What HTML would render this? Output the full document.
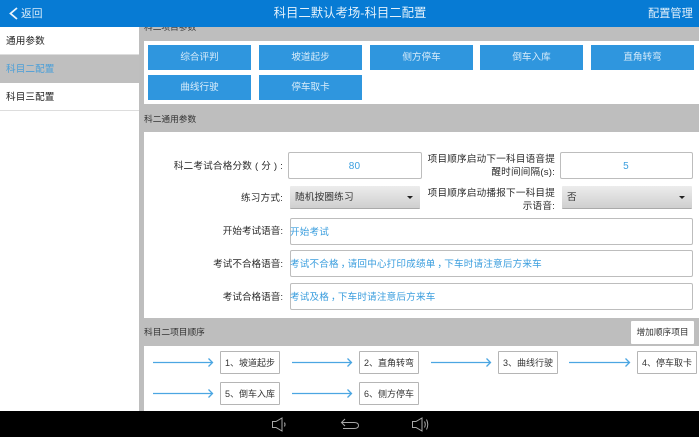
<!DOCTYPE html>
<html lang="zh">
<head>
<meta charset="utf-8">
<style>
html,body{margin:0;padding:0;width:699px;height:437px;overflow:hidden;background:#bebebe}
body{position:relative;font-family:"Liberation Sans","Noto Sans CJK SC",sans-serif;font-size:9.6px;color:#333;filter:blur(.3px)}
.a{position:absolute;box-sizing:border-box;white-space:nowrap}
.hdr{left:0;top:0;width:699px;height:27px;background:#077bd4;color:#e6f2fb}
.side{left:0;top:27px;width:139px;height:384px;background:#fff}
.si{left:0;width:139px;height:28px;line-height:29px;padding-left:6px;font-size:9.6px;letter-spacing:.1px;color:#222;border-bottom:1px solid #ddd}
.card{left:144px;width:555px;background:#fff}
.b{height:25px;width:103px;background:#2f96de;color:#d8ecfa;text-align:center;line-height:26px;font-size:9.6px}
.t{font-size:8.7px;color:#333}
.l{right:416px;text-align:right;line-height:14px;font-size:9.6px;letter-spacing:.2px;color:#2a2a2a}
.n{letter-spacing:0}
.i{background:#fff;border:1px solid #bdbdbd;border-radius:2px;color:#3b9ede;font-size:9.6px;letter-spacing:.17px;line-height:27px;text-indent:-1px}
.c{display:inline-block;transform:translateX(.3em)}
.s{height:23px;width:130px;background:linear-gradient(#ececec,#cfcfcf);border-bottom:1px solid #aaa;border-radius:1px;line-height:23px;padding-left:5px;font-size:9.6px;letter-spacing:.2px;color:#333}
.s:after{content:"";position:absolute;right:7px;top:10px;border-left:3.5px solid transparent;border-right:3.5px solid transparent;border-top:3.5px solid #222}
.bx{width:60px;height:23px;background:#fff;border:1px solid #b5b5b5;border-radius:1px;text-align:center;line-height:23px;font-size:9px;color:#333}
</style>
</head>
<body>
<div class="a hdr"></div>
<svg class="a" style="left:0;top:0" width="30" height="27"><path d="M17 8L10.500 13.500L17 19" fill="none" stroke="#eaf4fc" stroke-width="1.8"/></svg>
<div class="a" style="left:21px;top:0;height:27px;line-height:29px;font-size:10.8px;color:#d8ecfa">返回</div>
<div class="a" style="left:273px;top:0;height:27px;line-height:27px;font-size:12.4px;color:#e3f1fb;width:154px;text-align:center">科目二默认考场-科目二配置</div>
<div class="a" style="left:648px;top:0;height:27px;line-height:28px;font-size:11.2px;color:#e3f1fb">配置管理</div>

<div class="a side"></div>
<div class="a si" style="top:27px">通用参数</div>
<div class="a si" style="top:55px;background:#bfbfbf;color:#4a9fd8;border:0">科目二配置</div>
<div class="a si" style="top:83px">科目三配置</div>

<div class="a t" style="left:144px;top:20px;height:14px;line-height:14px;clip-path:inset(7px 0 0 0)">科二项目参数</div>
<div class="a card" style="top:41px;height:63px"></div>
<div class="a b" style="left:148px;top:45px">综合评判</div>
<div class="a b" style="left:259px;top:45px">坡道起步</div>
<div class="a b" style="left:370px;top:45px">侧方停车</div>
<div class="a b" style="left:480px;top:45px">倒车入库</div>
<div class="a b" style="left:591px;top:45px">直角转弯</div>
<div class="a b" style="left:148px;top:75px">曲线行驶</div>
<div class="a b" style="left:259px;top:75px">停车取卡</div>

<div class="a t" style="left:144px;top:112px;line-height:14px">科二通用参数</div>
<div class="a card" style="top:132px;height:186px"></div>

<div class="a l" style="top:160px">科二考试合格分数 ( 分 ) :</div>
<div class="a i" style="left:288px;top:152px;width:134px;height:27px;text-align:center;font-size:10px">80</div>
<div class="a" style="left:418px;top:153px;width:137px;text-align:right;line-height:13px;font-size:9.6px;letter-spacing:.2px;color:#2a2a2a">项目顺序启动下一科目语音提<br>醒时间间隔(s):</div>
<div class="a i" style="left:560px;top:152px;width:133px;height:27px;text-align:center;font-size:10px">5</div>

<div class="a l" style="top:192px">练习方式:</div>
<div class="a s" style="left:290px;top:186px">随机按圈练习</div>
<div class="a" style="left:418px;top:188px;width:137px;text-align:right;line-height:12.5px;font-size:9.6px;letter-spacing:.2px;color:#2a2a2a">项目顺序启动播报下一科目提<br>示语音:</div>
<div class="a s" style="left:562px;top:186px">否</div>

<div class="a l n" style="top:225px">开始考试语音:</div>
<div class="a i" style="left:290px;top:218px;width:403px;height:27px">开始考试</div>
<div class="a l n" style="top:258px">考试不合格语音:</div>
<div class="a i" style="left:290px;top:250px;width:403px;height:27px">考试不合格<span class="c">，</span>请回中心打印成绩单<span class="c">，</span>下车时请注意后方来车</div>
<div class="a l n" style="top:291px">考试合格语音:</div>
<div class="a i" style="left:290px;top:283px;width:403px;height:27px">考试及格<span class="c">，</span>下车时请注意后方来车</div>

<div class="a t" style="left:144px;top:325px;line-height:14px">科目二项目顺序</div>
<div class="a" style="left:631px;top:321px;width:63px;height:23px;background:#fff;border-radius:1px;text-align:center;line-height:23px;font-size:8.7px;color:#333">增加顺序项目</div>
<div class="a card" style="top:346px;height:65px"></div>

<svg class="a" style="left:0;top:340px" width="699" height="71" fill="none" stroke="#4ba6e2" stroke-width="1.3">
<path d="M153 22.500H212M208.500 18.500L212.500 22.500L208.500 26.500"/>
<path d="M292 22.500H351M347.500 18.500L351.500 22.500L347.500 26.500"/>
<path d="M431 22.500H490M486.500 18.500L490.500 22.500L486.500 26.500"/>
<path d="M569 22.500H629M625.500 18.500L629.500 22.500L625.500 26.500"/>
<path d="M153 53.500H212M208.500 49.500L212.500 53.500L208.500 57.500"/>
<path d="M292 53.500H351M347.500 49.500L351.500 53.500L347.500 57.500"/>
</svg>
<div class="a bx" style="left:220px;top:351px">1、坡道起步</div>
<div class="a bx" style="left:359px;top:351px">2、直角转弯</div>
<div class="a bx" style="left:498px;top:351px">3、曲线行驶</div>
<div class="a bx" style="left:637px;top:351px">4、停车取卡</div>
<div class="a bx" style="left:220px;top:382px">5、倒车入库</div>
<div class="a bx" style="left:359px;top:382px">6、侧方停车</div>

<div class="a" style="left:0;top:411px;width:699px;height:26px;background:#000"></div>
<svg class="a" style="left:260px;top:410px" width="180" height="27" fill="none" stroke="#a8a8a8" stroke-width="1">
<path d="M12.500 11.500H16L22 8V21L16 17.500H12.500Z"/>
<path d="M24.500 12.500Q25.500 14.500 24.500 16.500"/>
<path d="M85 9L81.500 12.500L85 16M81.500 12.500H94Q98.500 12.500 98.500 15.500Q98.500 18.500 94 18.500H83"/>
<path d="M152.500 11.500H156L162 8V21L156 17.500H152.500Z"/>
<path d="M164.500 11.500Q166 14.500 164.500 17.500M166.500 9.500Q169 14.500 166.500 19.500"/>
</svg>
</body>
</html>
